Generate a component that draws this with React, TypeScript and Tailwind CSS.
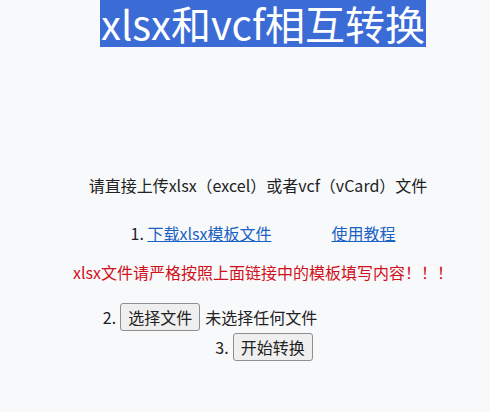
export default function App() {
  return (
    <div
      className="min-h-[412px] w-full bg-[#f8f9fb] text-[16px] text-[#222]"
      style={{ fontFamily: '"Noto Sans CJK SC", "Noto Sans", sans-serif' }}
    >
      {/* title */}
      <div className="flex justify-center pl-[36px]">
        <h1 className="bg-[#3b6cd6] px-[1px] text-[40px] leading-[47px] font-normal text-white">
          xlsx和vcf相互转换
        </h1>
      </div>

      <div className="mt-[124px] flex justify-center pl-[26px] leading-[28px]">
        请直接上传xlsx（excel）或者vcf（vCard）文件
      </div>

      <div className="mt-[20px] flex justify-center gap-[60px] pl-[36px] leading-[28px]">
        <span>
          1. <a href="#" className="text-[#1a62c4] underline">下载xlsx模板文件</a>
        </span>
        <a href="#" className="text-[#1a62c4] underline">使用教程</a>
      </div>

      <div className="mt-[11px] flex justify-center pl-[36px] leading-[28px] text-[#d0101a]">
        xlsx文件请严格按照上面链接中的模板填写内容！！！
      </div>

      <div className="mt-[17px] flex items-center justify-center pr-[70px]">
        <span>2.</span>
        <button className="ml-[4px] h-[28px] rounded-[3px] border border-[#8f8f8f] bg-[#efefef] px-[7px] leading-[26px]">
          选择文件
        </button>
        <span className="ml-[5px]">未选择任何文件</span>
      </div>

      <div className="mt-[2px] flex items-center justify-center pl-[38px]">
        <span>3.</span>
        <button className="ml-[4px] h-[28px] rounded-[3px] border border-[#8f8f8f] bg-[#efefef] px-[7px] leading-[26px]">
          开始转换
        </button>
      </div>
    </div>
  );
}
